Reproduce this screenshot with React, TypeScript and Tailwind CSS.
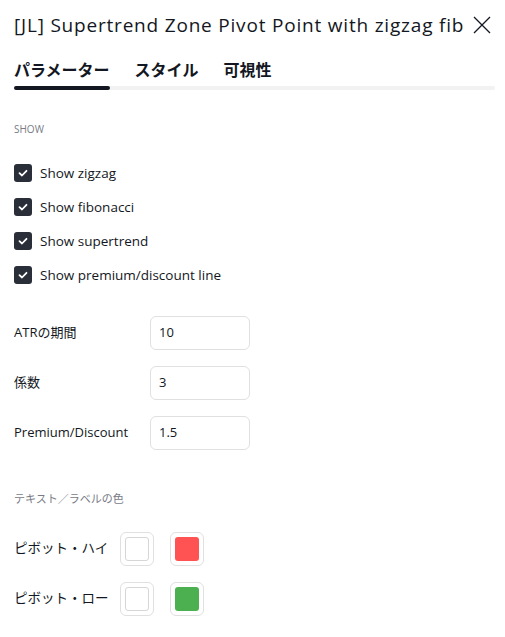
import React from "react";

const font = { fontFamily: '"Open Sans", "Noto Sans CJK JP", sans-serif' };

function Check({ label }: { label: string }) {
  return (
    <div className="flex items-center h-[34px]">
      <div className="w-[18px] h-[18px] rounded-[3px] bg-[#2a2e39] flex items-center justify-center">
        <svg width="12" height="12" viewBox="0 0 12 12">
          <path d="M2.5 6.2 L5 8.5 L9.5 3.8" stroke="white" strokeWidth="1.8" fill="none" strokeLinecap="round" strokeLinejoin="round" />
        </svg>
      </div>
      <span className="ml-2 text-[13.5px] text-[#131722]">{label}</span>
    </div>
  );
}

function NumRow({ label, value }: { label: string; value: string }) {
  return (
    <div className="flex items-center h-[50px]">
      <span className="w-[136px] text-[13px] text-[#131722]">{label}</span>
      <div className="w-[100px] h-[34px] border border-[#e0e0e0] rounded-[6px] flex items-center px-[8px] text-[13px] text-[#131722]">
        {value}
      </div>
    </div>
  );
}

function Swatch({ color }: { color?: string }) {
  return (
    <div className="w-[34px] h-[34px] border border-[#e0e0e0] rounded-[6px] flex items-center justify-center">
      <div
        className="w-[24px] h-[24px] rounded-[3px]"
        style={color ? { background: color } : { border: "1px solid #d6d6d6" }}
      />
    </div>
  );
}

function ColorRow({ label, color }: { label: string; color: string }) {
  return (
    <div className="flex items-center h-[50px]">
      <span className="w-[106px] text-[13.5px] text-[#131722] whitespace-nowrap">{label}</span>
      <Swatch />
      <div className="w-[16px]" />
      <Swatch color={color} />
    </div>
  );
}

export default function App() {
  return (
    <div className="w-[505px] h-[637px] bg-white overflow-hidden" style={font}>
      <div className="flex items-center justify-between pl-[14px] pr-[14px] h-[50px]">
        <span className="text-[19px] tracking-[0.8px] text-[#131722] whitespace-nowrap">[JL] Supertrend Zone Pivot Point with zigzag fib</span>
        <svg width="18" height="18" viewBox="0 0 18 18" className="shrink-0">
          <path d="M1 1 L17 17 M17 1 L1 17" stroke="#131722" strokeWidth="1.3" />
        </svg>
      </div>
      <div className="mx-[14px] mt-[4px]">
        <div className="flex gap-[25px] text-[16px] font-bold text-[#131722] h-[32px] items-center">
          <span>パラメーター</span>
          <span>スタイル</span>
          <span>可視性</span>
        </div>
        <div className="h-[4px] w-[481px] bg-[#f2f2f2] rounded-full">
          <div className="h-[4px] w-[96px] bg-[#131722] rounded-full" />
        </div>
      </div>
      <div className="px-[14px]">
        <div className="mt-[32px] text-[10px] text-[#787b86]">SHOW</div>
        <div className="mt-[19px] flex flex-col">
          <Check label="Show zigzag" />
          <Check label="Show fibonacci" />
          <Check label="Show supertrend" />
          <Check label="Show premium/discount line" />
        </div>
        <div className="mt-[16px]">
          <NumRow label="ATRの期間" value="10" />
          <NumRow label="係数" value="3" />
          <NumRow label="Premium/Discount" value="1.5" />
        </div>
        <div className="mt-[33px] text-[11px] text-[#787b86]">テキスト／ラベルの色</div>
        <div className="mt-[16px]">
          <ColorRow label="ピボット・ハイ" color="#ff5252" />
          <ColorRow label="ピボット・ロー" color="#4caf50" />
        </div>
      </div>
    </div>
  );
}
